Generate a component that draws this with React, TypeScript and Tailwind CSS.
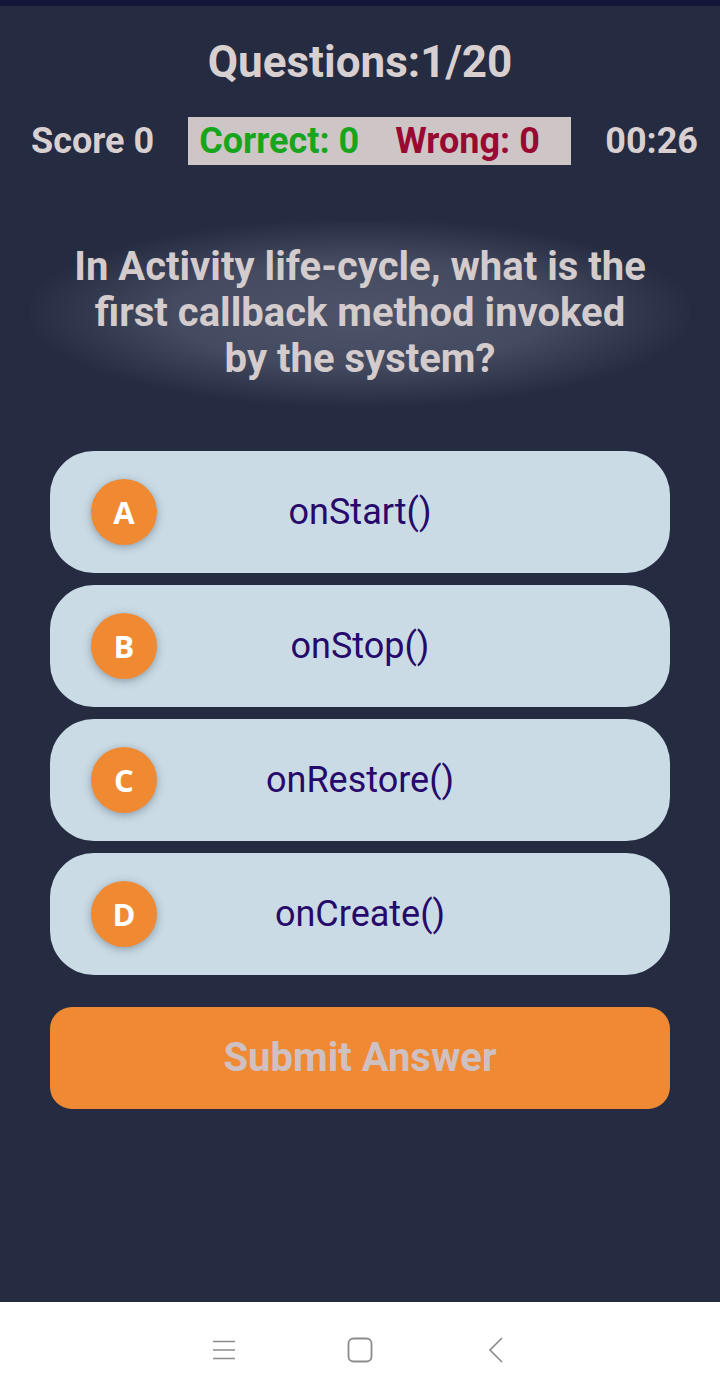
const options = [
  { key: "A", label: "onStart()" },
  { key: "B", label: "onStop()" },
  { key: "C", label: "onRestore()" },
  { key: "D", label: "onCreate()" },
];

const OptionCard = ({ letter, label }: { letter: string; label: string }) => {
  return (
    <div className="grid grid-cols-[66px_1fr_66px] items-center h-[122px] px-[41px] rounded-[44px] bg-[#cadbe5]">
      <div className="flex items-center justify-center w-[66px] h-[66px] rounded-full bg-[#ef8a33] shadow-[0_2px_8px_rgba(60,80,100,0.45)] text-white text-[31px] font-bold font-['Open_Sans',sans-serif]">
        {letter}
      </div>
      <div className="text-center text-[36px] text-[#26096b] font-['Roboto',sans-serif]">
        {label}
      </div>
      <div />
    </div>
  );
};

const App = () => {
  return (
    <div className="flex flex-col min-h-[1398px] bg-[#252b41] font-['Roboto',sans-serif]">
      <div className="h-[6px] bg-[#15173a]" />

      <main className="flex-1 flex flex-col">
        <div className="pt-[30px] text-center text-[44px] leading-[52px] font-bold text-[#d8cfd0]">
          Questions:1/20
        </div>

        <div className="flex items-center justify-between pl-[31px] pr-[22px] mt-[26px] text-[36px] font-bold">
          <span className="text-[#d8cfd0]">Score 0</span>
          <div className="flex items-center gap-[36px] w-[383px] h-[48px] pl-[11px] bg-[#cec5c7]">
            <span className="text-[#17a51c]">Correct: 0</span>
            <span className="text-[#990a33]">Wrong: 0</span>
          </div>
          <span className="text-[#d8cfd0]">00:26</span>
        </div>

        <div className="flex justify-center mt-[52px] mx-[30px] py-[24px] bg-[radial-gradient(ellipse_at_center,#4d5368_0%,#444a60_40%,#252b41_72%)]">
          <p className="w-[582px] text-center text-[40px] leading-[46px] font-bold text-[#d3cbcc]">
            In Activity life-cycle, what is the first callback method invoked by
            the system?
          </p>
        </div>

        <div className="flex flex-col gap-[12px] mx-[50px] mt-[45px]">
          {options.map((o) => (
            <OptionCard key={o.key} letter={o.key} label={o.label} />
          ))}
        </div>

        <button className="mx-[50px] mt-[32px] h-[102px] rounded-[22px] bg-[#ef8933] text-[40px] font-bold text-[#cfc1c3]">
          Submit Answer
        </button>
      </main>

      <nav className="flex items-center justify-center h-[96px] bg-white">
        <div className="flex items-center justify-center w-[136px]">
          <svg width="24" height="22" viewBox="0 0 24 22" fill="none" stroke="#8c8c8c" strokeWidth="1.6">
            <path d="M1 2.5h22M1 11h22M1 19.5h22" />
          </svg>
        </div>
        <div className="flex items-center justify-center w-[136px]">
          <svg width="26" height="26" viewBox="0 0 26 26" fill="none" stroke="#8c8c8c" strokeWidth="1.8">
            <rect x="1.5" y="1.5" width="23" height="23" rx="5" />
          </svg>
        </div>
        <div className="flex items-center justify-center w-[136px]">
          <svg width="16" height="26" viewBox="0 0 16 26" fill="none" stroke="#8c8c8c" strokeWidth="1.7">
            <path d="M14 1L2 13l12 12" />
          </svg>
        </div>
      </nav>
    </div>
  );
};

export default App;
